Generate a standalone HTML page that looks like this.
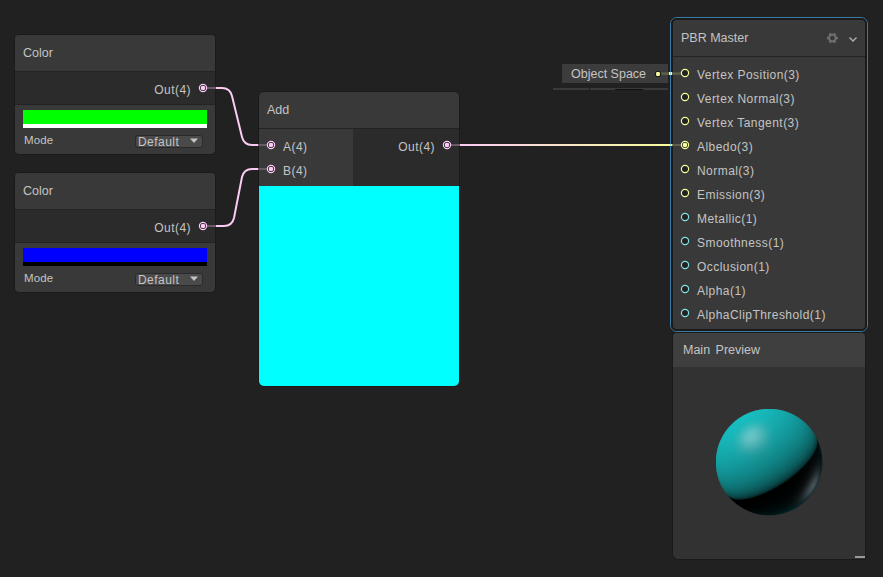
<!DOCTYPE html>
<html><head><meta charset="utf-8">
<style>
*{margin:0;padding:0;box-sizing:border-box}
html,body{width:883px;height:577px;overflow:hidden;background:#212121;font-family:"Liberation Sans",sans-serif;color:#c4c4c4}
.a{position:absolute}
.node{position:absolute;border:1px solid #1a1a1a;border-radius:5px;background:#393939;overflow:hidden}
.hdr{position:absolute;left:0;right:0;top:0;height:37px;background:#393939;border-bottom:1px solid #232323}
.title{position:absolute;font-size:12.5px;top:11px;left:8px;color:#c4c4c4}
.lbl{position:absolute;font-size:12px;letter-spacing:0.45px;white-space:nowrap;color:#c4c4c4}
.dd{position:absolute;background:#4a4a4a;border:1px solid #2a2a2a;border-radius:3px}
</style></head><body>

<!-- Color node 1 -->
<div class="node" style="left:14px;top:34px;width:202px;height:121px">
  <div class="hdr"><div class="title">Color</div></div>
  <div class="a" style="left:0;right:0;top:37px;height:33px;background:#2b2b2b;border-bottom:1px solid #232323"></div>
  <div class="lbl" style="right:24px;top:48px">Out(4)</div>
  <div class="a" style="left:8px;top:75px;width:184px;height:14px;background:#00ff00"></div>
  <div class="a" style="left:8px;top:89px;width:184px;height:4px;background:#ffffff"></div>
  <div class="lbl" style="left:9px;top:99px;font-size:11.5px;letter-spacing:0.1px">Mode</div>
  <div class="dd" style="left:120px;top:100px;width:68px;height:13px"></div>
  <div class="lbl" style="left:123px;top:100px">Default</div>
</div>

<!-- Color node 2 -->
<div class="node" style="left:14px;top:172px;width:202px;height:121px">
  <div class="hdr"><div class="title">Color</div></div>
  <div class="a" style="left:0;right:0;top:37px;height:33px;background:#2b2b2b;border-bottom:1px solid #232323"></div>
  <div class="lbl" style="right:24px;top:48px">Out(4)</div>
  <div class="a" style="left:8px;top:75px;width:184px;height:14px;background:#0000ff"></div>
  <div class="a" style="left:8px;top:89px;width:184px;height:4px;background:#000000"></div>
  <div class="lbl" style="left:9px;top:99px;font-size:11.5px;letter-spacing:0.1px">Mode</div>
  <div class="dd" style="left:120px;top:100px;width:68px;height:13px"></div>
  <div class="lbl" style="left:123px;top:100px">Default</div>
</div>

<!-- Add node -->
<div class="node" style="left:258px;top:91px;width:202px;height:296px;border-radius:6px">
  <div class="hdr"><div class="title">Add</div></div>
  <div class="a" style="left:0;width:94px;top:37px;height:57px;background:#393939"></div>
  <div class="a" style="left:94px;right:0;top:37px;height:57px;background:#2b2b2b"></div>
  <div class="lbl" style="left:24px;top:48px">A(4)</div>
  <div class="lbl" style="left:24px;top:72px">B(4)</div>
  <div class="lbl" style="right:24px;top:48px">Out(4)</div>
  <div class="a" style="left:0;right:0;top:94px;bottom:0;background:#00ffff"></div>
</div>

<!-- Object space -->
<div class="a" style="left:562px;top:64px;width:106px;height:19px;background:#3c3c3c"></div>
<div class="lbl" style="left:571px;top:67px;font-size:12.5px;letter-spacing:0">Object Space</div>
<div class="a" style="left:553px;top:88px;width:115px;height:2px;background:#3a3a3a"></div>
<div class="a" style="left:589px;top:88px;width:1px;height:2px;background:#212121"></div>
<div class="a" style="left:615px;top:89px;width:28px;height:1px;background:#111"></div>

<!-- PBR master outline -->
<div class="a" style="left:670px;top:17px;width:198px;height:315px;border:1px solid #3b7aa5;border-radius:7px"></div>
<div class="node" style="left:671px;top:18px;width:196px;height:313px;border:2px solid #1a1a1a;border-radius:6px">
  <div class="hdr" style="background:#393939"><div class="title">PBR Master</div></div>
  <div class="a" style="left:0;right:0;top:37px;bottom:0;background:#393939"></div>
  <div class="lbl" style="left:24px;top:48px">Vertex Position(3)</div>
  <div class="lbl" style="left:24px;top:72px">Vertex Normal(3)</div>
  <div class="lbl" style="left:24px;top:96px">Vertex Tangent(3)</div>
  <div class="lbl" style="left:24px;top:120px">Albedo(3)</div>
  <div class="lbl" style="left:24px;top:144px">Normal(3)</div>
  <div class="lbl" style="left:24px;top:168px">Emission(3)</div>
  <div class="lbl" style="left:24px;top:192px">Metallic(1)</div>
  <div class="lbl" style="left:24px;top:216px">Smoothness(1)</div>
  <div class="lbl" style="left:24px;top:240px">Occlusion(1)</div>
  <div class="lbl" style="left:24px;top:264px">Alpha(1)</div>
  <div class="lbl" style="left:24px;top:288px">AlphaClipThreshold(1)</div>
</div>

<!-- Main preview -->
<div class="node" style="left:672px;top:332px;width:194px;height:228px;border-radius:5px 5px 0 7px">
  <div class="hdr" style="height:34px;background:#3f3f3f;border-bottom:none"><div class="title" style="top:10px;left:10px;word-spacing:2px">Main Preview</div></div>
  <div class="a" style="left:0;right:0;top:34px;bottom:0;background:#323232"></div>
</div>
<div class="a" style="left:855px;top:556px;width:10px;height:2px;background:#9a9a9a"></div>

<svg class="a" style="left:0;top:0" width="883" height="577" viewBox="0 0 883 577">
  <defs>
    <linearGradient id="wg" x1="460" y1="0" x2="672" y2="0" gradientUnits="userSpaceOnUse">
      <stop offset="0" stop-color="#fbcbf4"/><stop offset="1" stop-color="#f6ff9a"/>
    </linearGradient>
    <radialGradient id="sph" cx="752" cy="437" r="82" gradientUnits="userSpaceOnUse">
      <stop offset="0" stop-color="#66cccc"/>
      <stop offset="0.12" stop-color="#2ebfc0"/>
      <stop offset="0.35" stop-color="#14b0b2"/>
      <stop offset="0.65" stop-color="#0f9a9d"/>
      <stop offset="0.85" stop-color="#0a7479"/>
      <stop offset="1" stop-color="#06494d"/>
    </radialGradient>
  </defs>
  <!-- stubs -->
  <g stroke="#6a5a68" stroke-width="2">
    <line x1="207" y1="88" x2="216" y2="88"/>
    <line x1="207" y1="226" x2="216" y2="226"/>
    <line x1="258" y1="145" x2="267" y2="145"/>
    <line x1="258" y1="169" x2="267" y2="169"/>
    <line x1="451" y1="145" x2="460" y2="145"/>
  </g>
  <!-- wires -->
  <g fill="none" stroke="#fbcbf4" stroke-width="2">
    <path d="M216 88 H222 Q230 88 232 96 L242 137 Q244 145 252 145 H258"/>
    <path d="M216 226 H224 Q232 226 234 218 L242 177 Q244 169 252 169 H258"/>
  </g>
  <line x1="460" y1="145" x2="672.5" y2="145" stroke="url(#wg)" stroke-width="2"/>
  <rect x="670" y="144" width="1" height="2" fill="#a8dcc8"/>
  <line x1="673" y1="145" x2="681" y2="145" stroke="#5e604a" stroke-width="2"/>
  <rect x="660" y="72.3" width="22" height="2.6" fill="#5c5e48"/>
  <rect x="669" y="72" width="3" height="3" fill="#f6ff9a"/>
  <rect x="670" y="72" width="1" height="3" fill="#a8dcc8"/>
  <!-- ports -->
  <g fill="#1c1c1c" stroke="#fbcbf4" stroke-width="1.2">
    <circle cx="203" cy="88" r="3.6"/>
    <circle cx="203" cy="226" r="3.6"/>
    <circle cx="271" cy="145" r="3.6"/>
    <circle cx="271" cy="169" r="3.6"/>
    <circle cx="447" cy="145" r="3.6"/>
  </g>
  <g fill="#fbcbf4">
    <circle cx="203" cy="88" r="2.3"/>
    <circle cx="203" cy="226" r="2.3"/>
    <circle cx="271" cy="145" r="2.3"/>
    <circle cx="271" cy="169" r="2.3"/>
    <circle cx="447" cy="145" r="2.3"/>
  </g>
  <g fill="#222" stroke="#f6ff9a" stroke-width="1.2">
    <circle cx="685" cy="73" r="3.6"/>
    <circle cx="685" cy="97" r="3.6"/>
    <circle cx="685" cy="121" r="3.6"/>
    <circle cx="685" cy="145" r="3.6"/>
    <circle cx="685" cy="169" r="3.6"/>
    <circle cx="685" cy="193" r="3.6"/>
  </g>
  <circle cx="685" cy="145" r="2.3" fill="#f6ff9a"/>
  <g fill="#222" stroke="#84e4e7" stroke-width="1.2">
    <circle cx="685" cy="217" r="3.6"/>
    <circle cx="685" cy="241" r="3.6"/>
    <circle cx="685" cy="265" r="3.6"/>
    <circle cx="685" cy="289" r="3.6"/>
    <circle cx="685" cy="313" r="3.6"/>
  </g>
  <rect x="655.5" y="71.5" width="5" height="5" rx="1.6" fill="#f6ff9a" stroke="#1a1a1a" stroke-width="1.2"/>
  <!-- dropdown arrows -->
  <path d="M190 138.6 H198 L194 143 Z" fill="#c4c4c4"/>
  <path d="M190 276.6 H198 L194 281 Z" fill="#c4c4c4"/>
  <!-- gear -->
  <path fill-rule="evenodd" fill="#6e6e6e" d="M836.12 35.85 L836.49 36.67 L837.86 36.74 L837.86 39.26 L836.49 39.33 L836.12 40.15 L835.60 40.88 L836.22 42.10 L834.04 43.36 L833.29 42.21 L832.40 42.30 L831.51 42.21 L830.76 43.36 L828.58 42.10 L829.20 40.88 L828.68 40.15 L828.31 39.33 L826.94 39.26 L826.94 36.74 L828.31 36.67 L828.68 35.85 L829.20 35.12 L828.58 33.90 L830.76 32.64 L831.51 33.79 L832.40 33.70 L833.29 33.79 L834.04 32.64 L836.22 33.90 L835.60 35.12 Z M834.7 38 A2.3 2.3 0 1 0 830.1 38 A2.3 2.3 0 1 0 834.7 38 Z"/>
  <path d="M849.5 37.5 L853 41 L856.5 37.5" fill="none" stroke="#b0b0b0" stroke-width="1.4"/>
  <!-- sphere -->
  <clipPath id="sc"><circle cx="769" cy="462" r="53.5"/></clipPath>
  <filter id="bl1" x="-20%" y="-20%" width="140%" height="140%"><feGaussianBlur stdDeviation="1.3"/></filter>
  <filter id="bl2" x="-50%" y="-50%" width="200%" height="200%"><feGaussianBlur stdDeviation="2.5"/></filter>
  <g clip-path="url(#sc)">
    <circle cx="769" cy="462" r="54" fill="url(#sph)"/>
    <path d="M 712 494 C 745 503, 795 488, 818 440 L 850 420 L 850 540 L 700 540 Z" fill="#000" filter="url(#bl1)"/>
    <path d="M 823 452 Q 820 495 790 514" fill="none" stroke="#2f6a72" stroke-width="4" filter="url(#bl2)"/>
  </g>
</svg>
<canvas id="sp" width="140" height="140" style="position:absolute;left:699px;top:392px;width:140px;height:140px"></canvas>
<script>
(function(){
var c=document.getElementById('sp'); if(!c||!c.getContext) return;
var g=c.getContext('2d'); var W=140,H=140; var img=g.createImageData(W,H); var d=img.data;
var ox=699, oy=392, cx=769.2, cy=462.2, R=53.3, D=4.31, ta=1/Math.sqrt(D*D-1);
function nrm(v){var l=Math.hypot(v[0],v[1],v[2]);return [v[0]/l,v[1]/l,v[2]/l];}
var L=nrm([-0.489,-0.756,0.372]);
var L2=nrm([0.7,0.6,-0.3]);
function nat(u,v){var dv=nrm([u*ta,v*ta,-1]);var bb=2*D*dv[2],cc=D*D-1,disc=Math.max(0,bb*bb-4*cc);var t=(-bb-Math.sqrt(disc))/2;return [t*dv[0],t*dv[1],D+t*dv[2]];}
var HS=nat(-0.329,-0.479); var HR=nat(0.80,0.44);
var bg=[50,50,50];
function toS(v){v=Math.max(0,Math.min(1,v)); return 255*Math.pow(v,1/2.2);}
function toL(v){return Math.pow(v/255,2.2);}
var bgl=[toL(bg[0]),toL(bg[1]),toL(bg[2])];
var ss=4;
for(var py=0;py<H;py++){for(var px=0;px<W;px++){
  var acc=[0,0,0];
  for(var sy=0;sy<ss;sy++){for(var sx=0;sx<ss;sx++){
    var x=ox+px+(sx+0.5)/ss, y=oy+py+(sy+0.5)/ss;
    var u=(x-cx)/R, v=(y-cy)/R;
    if(u*u+v*v>=1){acc[0]+=bgl[0];acc[1]+=bgl[1];acc[2]+=bgl[2];continue;}
    var dv=nrm([u*ta,v*ta,-1]);
    var bb=2*D*dv[2], cc=D*D-1, disc=bb*bb-4*cc; if(disc<0)disc=0;
    var t=(-bb-Math.sqrt(disc))/2;
    var n=[t*dv[0],t*dv[1],D+t*dv[2]];
    var V=[-dv[0],-dv[1],-dv[2]];
    var nd=n[0]*L[0]+n[1]*L[1]+n[2]*L[2];
    var dif=Math.max(0,nd);
    var Hh=HS;
    var nh=Math.max(0,n[0]*Hh[0]+n[1]*Hh[1]+n[2]*Hh[2]);
    var spec=Math.pow(nh,60)*0.13*Math.min(1,dif*8);
    var nv=Math.max(0,n[0]*V[0]+n[1]*V[1]+n[2]*V[2]);
    var n2=Math.max(0,n[0]*L2[0]+n[1]*L2[1]+n[2]*L2[2]);
    var gl=0.05*Math.pow(1-nv,2.5)*Math.pow(n2,2.5); var sp2=Math.pow(Math.max(0,n[0]*HR[0]+n[1]*HR[1]+n[2]*HR[2]),45)*Math.exp(-Math.pow((nv-0.3)/0.2,2))*0.1;
    var k=0.52, dd=Math.pow(dif,0.8);
    acc[0]+=dd*k*0.01+spec+sp2*0.6;
    acc[1]+=dd*k+spec+gl+sp2*0.85;
    acc[2]+=dd*k*1.03+spec+gl*1.1+sp2;
  }}
  var i=(py*W+px)*4;
  d[i]=toS(acc[0]/(ss*ss)); d[i+1]=toS(acc[1]/(ss*ss)); d[i+2]=toS(acc[2]/(ss*ss)); d[i+3]=255;
}}
g.putImageData(img,0,0);
})();
</script>
</body></html>
